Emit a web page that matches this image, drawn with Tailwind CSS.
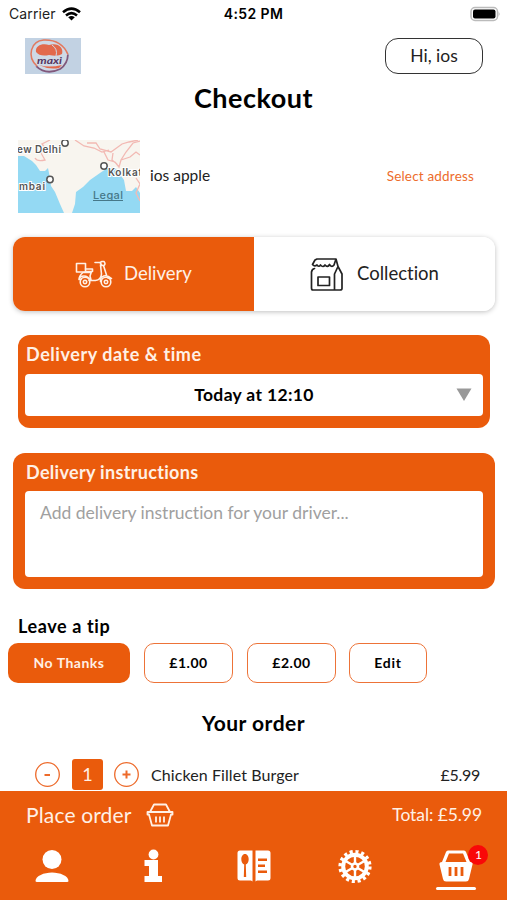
<!DOCTYPE html>
<html lang="en">
<head>
<meta charset="utf-8">
<title>Checkout</title>
<script src="https://cdn.jsdelivr.net/npm/@tailwindcss/browser@4"></script>
</head>
<body class="w-[507px] h-[900px] overflow-hidden bg-white font-['Lato',sans-serif] text-[#222] whitespace-nowrap [font-variant-ligatures:none]">
<main class="h-[791px] overflow-hidden">
  <!-- status bar -->
  <div class="h-7 pl-[9px] pr-[6px] grid grid-cols-3 items-center font-['Inter',sans-serif] text-[14px] leading-7">
    <div class="flex items-center gap-[6px]"><span class="tracking-[0.1px]">Carrier</span>
      <svg class="w-[19px] h-[14px]" viewBox="0 0 19 14" fill="none" stroke="#000" stroke-width="2.6"><path d="M1 5.2Q9.5-2 18 5.2M4 8.4Q9.500 3.800 15 8.400"/><path d="M6.200 10.300Q9.500 7.600 12.800 10.300L9.500 13.600Z" fill="#000" stroke="none"/></svg>
    </div>
    <div class="-ml-[3px] text-center font-semibold text-black tracking-[0.4px]">4:52 PM</div>
    <svg class="justify-self-end w-[31px] h-[16px]" viewBox="0 0 31 16"><rect x="1" y="1.500" width="26.500" height="13" rx="4" fill="#fff" stroke="#bbb" stroke-width="1.500"/><rect x="3" y="3.500" width="22.500" height="9" rx="2" fill="#000"/><path d="M28.700 5.500Q30.500 8 28.700 10.500Z" fill="#aaa"/></svg>
  </div>
  <!-- brand and greeting -->
  <header class="mt-[10px] h-9 pl-[25px] pr-6 flex justify-between">
    <svg class="w-14 h-9" viewBox="0 0 56 36"><rect width="56" height="36" fill="#c2d2e3"/><g transform="rotate(14 24.500 18)"><ellipse cx="24.500" cy="18" rx="18.500" ry="15.500" fill="#cfd9e6"/><path d="M14 31Q26 38 38 28Q44 21 42 12" fill="none" stroke="#80587c" stroke-width="1.800"/><path d="M15 31C2 24 3 8 15 4Q32-1 42 12" fill="none" stroke="#e2795f" stroke-width="1.500"/></g><path d="M11 14C10 7 18 5 24 7C33 4 39 10 37 16Q33 19 24 17Q15 19 11 14Z" fill="#e2694c"/><path d="M27 7Q33 11 31 18" stroke="#cfd9e6" fill="none"/><path d="M14 27Q24 30 37 27L34 30Q24 32 14 27Z" fill="#e2694c"/><text x="12" y="26" font-family="Lato" font-size="10" font-style="italic" font-weight="700" fill="#56355f" textLength="25" lengthAdjust="spacingAndGlyphs">maxi</text></svg>
    <div class="w-[98px] h-[36px] rounded-[13px] border-[1.500px] border-[#333] text-center text-[17.500px] leading-[34px]">Hi, ios</div>
  </header>
  <h1 class="h-[48px] text-center text-black font-bold text-[27px] leading-[47px] tracking-[0.500px]">Checkout</h1>
  <!-- address -->
  <section class="mt-[18px] h-[73px] pl-[18px] pr-[33px] flex items-center">
    <svg class="w-[122px] h-[73px]" viewBox="0 0 122 73" font-family="Inter" font-size="10" font-weight="600" fill="#555">
      <rect width="122" height="73" fill="#94d9f3"/>
      <path d="M0 0H122V53L118 47L114 51H108L106 40L101 33L97 27L88 29L82 33L72 40L65 47L58 52L57 64L54 73H46L42 64L37 52L33 46L32 38L30 28L27 31L22 31L18 25L14 21L6 16H0Z" fill="#f8f5ef"/>
      <path d="M17 18Q19 22 27 20L23 13L28 9L24 4L32 0M57 0L66 6L76 8L84 12L91 10M69 3L78 3L82 9L93 12L104 4L111 2L120 0M86 12L90 20L97 22L101 27L103 20L108 12L115 3L122 1M95 13L94 20L99 24M103 20L112 17L118 12L122 15M118 38L122 44L118 53L122 61" fill="none" stroke="#f2b9b3" stroke-width="1.300"/>
      <g fill="#fff" stroke="#555" stroke-width="1.500"><circle cx="47" cy="3" r="3.200"/><circle cx="86" cy="26" r="3.200"/><circle cx="32" cy="39.500" r="3.200"/></g>
      <g stroke="#fff" stroke-width="2" paint-order="stroke"><text x="-1" y="13.200" textLength="44">ew Delhi</text><text x="90" y="36" textLength="34">Kolkat</text><text x="1" y="50" textLength="26">mbai</text></g>
      <text x="75" y="58.500" font-weight="500" fill="#467889" font-size="11" textLength="30">Legal</text><path d="M75 60.500H105" stroke="#467889"/>
    </svg>
    <span class="ml-[10px] text-[15.500px] leading-5 -mt-[3px]">ios apple</span>
    <span class="ml-auto text-[13.500px] leading-5 tracking-[0.18px] text-[#ed6c2c] -mt-px">Select address</span>
  </section>
  <!-- fulfilment switch -->
  <section class="mt-6 mx-[13px] w-[482px] h-[74px] rounded-[12px] overflow-hidden shadow-[0_1px_5px_rgba(0,0,0,0.25)] flex text-[18.500px]">
    <div class="w-[241px] bg-[#ea5b0c] text-[#fff0e5] flex items-center pl-[62px]">
      <svg class="w-[38px] h-[28px]" viewBox="0 0 38 28" fill="none" stroke="#fff0e5" stroke-width="1.600" stroke-linejoin="round" stroke-linecap="round"><rect x="1.500" y="3.500" width="9" height="8.500"/><path d="M10.500 9H17.500V11.500H10.500M8 12.500C5 15 4 17 4 19.500H6M14 20.500H20.500Q26 20 26.500 14L25.500 5M20 2.500H25L27 1.500H29Q31 4 29 5.500H27L25 2.500M28.500 5.500L31.500 15M16.500 11.500L15 16L16 20M8 12.500H16M4 19.500C5 15.500 12 14 15.500 20.500M25.500 21.500C25 16 31 13.500 36.500 18.500L33 18"/><circle cx="10" cy="22" r="4.800"/><circle cx="10" cy="22" r="1.700"/><circle cx="31" cy="22" r="4.800"/><circle cx="31" cy="22" r="1.700"/></svg>
      <span class="ml-[11px]">Delivery</span>
    </div>
    <div class="flex-1 bg-white flex items-center pl-[56px]">
      <svg class="w-[34px] h-[35px]" viewBox="0 0 34 35" fill="none" stroke="#222" stroke-width="1.700" stroke-linejoin="round" stroke-linecap="round"><path d="M7 2H26L24 8C22.500 10 20.500 9.500 19.500 7.500Q17.500 11 15 8Q13 11 10.500 8Q9 10.500 7 8Q4.500 10 2.500 7.500L5 3ZM26 2L28 9.500L32 17V31.500Q32 33 30 33H3Q1.500 33 1.500 31V15Q2 12 4.500 11.500M28 9.500L24.500 17V33"/><rect x="8" y="20" width="11.500" height="8.500"/></svg>
      <span class="ml-[13px]">Collection</span>
    </div>
  </section>
  <!-- delivery slot -->
  <section class="mt-6 ml-[18px] w-[472px] h-[93px] rounded-[12px] bg-[#ea5b0c] pl-[7px]">
    <h2 class="h-[39px] pl-px text-[#fff0e5] font-bold text-[18px] leading-[38px] tracking-[0.560px]">Delivery date &amp; time</h2>
    <div class="relative w-[458px] h-[42px] rounded-[4px] bg-white text-center text-black font-bold text-[17.500px] leading-[41px] tracking-[0.350px]">Today at 12:10
      <svg class="absolute right-[11px] top-[14px] w-4 h-[13px]" viewBox="0 0 16 13"><path d="M0.500 0.500H15.500L8 13Z" fill="#999"/></svg>
    </div>
  </section>
  <section class="mt-[25px] ml-[13px] w-[482px] h-[136px] rounded-[12px] bg-[#ea5b0c] pl-3">
    <h2 class="h-[38px] pl-px text-[#fff0e5] font-bold text-[18px] leading-[38px] tracking-[0.320px]">Delivery instructions</h2>
    <div class="w-[458px] h-[86px] rounded-[4px] bg-white pl-[15px] text-[#a0a0a0] text-[17.500px] leading-[43px]">Add delivery instruction for your driver...</div>
  </section>
  <!-- tip -->
  <h2 class="mt-[25px] h-[29px] pl-[18px] text-black font-bold text-[18px] leading-[24px] tracking-[0.600px]">Leave a tip</h2>
  <div class="pl-[8px] flex h-10 text-[14px] leading-[37px] text-center font-bold text-black tracking-[0.500px]">
    <div class="w-[122px] h-[39.500px] rounded-[10px] bg-[#ea5b0c] text-[#fff0e5] leading-[39px]">No Thanks</div>
    <div class="ml-[14px] w-[89px] rounded-[10px] border-[1.500px] border-[#ed7338]">£1.00</div>
    <div class="ml-[14px] w-[89px] rounded-[10px] border-[1.500px] border-[#ed7338]">£2.00</div>
    <div class="ml-[13px] w-[78px] rounded-[10px] border-[1.500px] border-[#ed7338] tracking-[0.800px]">Edit</div>
  </div>
  <!-- order -->
  <h2 class="mt-[20px] h-[40px] text-center text-black font-bold text-[21px] leading-10 tracking-[0.500px]">Your order</h2>
  <div class="mt-[16px] h-[31px] pl-[35px] pr-[27px] flex items-center text-[16px]">
    <svg class="w-[25px] h-[25px]" viewBox="0 0 25 25" fill="none" stroke="#ed6a2a"><circle cx="12.500" cy="12.500" r="11.800" stroke-width="1.300"/><path d="M9.500 13H15" stroke-width="2"/></svg>
    <span class="ml-3 w-[31px] h-[31px] rounded-[3px] bg-[#ea5b0c] text-[#fff0e5] text-[18px] leading-[31px] text-center">1</span>
    <svg class="ml-[11px] w-[25px] h-[25px]" viewBox="0 0 25 25" fill="none" stroke="#ed6a2a"><circle cx="12.500" cy="12.500" r="11.800" stroke-width="1.300"/><path d="M8.500 12.500H16.500M12.500 8.500V16.500" stroke-width="2"/></svg>
    <span class="ml-3 tracking-[0.090px]">Chicken Fillet Burger</span>
    <span class="ml-auto tracking-[-0.300px]">£5.99</span>
  </div>
</main>
<footer class="h-[109px] bg-[#ea5b0c] text-[#fff0e5]">
  <div class="h-[48px] pl-[26px] pr-[25px] flex items-center">
    <span class="text-[21px] tracking-[0.150px]">Place order</span>
    <svg class="ml-[14px] w-[28px] h-6" viewBox="0 0 28 24" fill="none" stroke="#fff0e5" stroke-width="1.800" stroke-linejoin="round"><path d="M4 9L8 1.500H20L24 9M1.500 9H26.500V11.500H25L22 22.500H6L3 11.500H1.500ZM10 13.500V19.500M14 13.500V19.500M18 13.500V19.500"/></svg>
    <span class="ml-auto text-[17.500px] tracking-[-0.080px]">Total: £5.99</span>
  </div>
  <nav class="pl-[1px] grid grid-cols-5 justify-items-center items-start pt-[10px]">
    <svg class="w-[34px] h-[34px]" viewBox="0 0 34 34" fill="#fff"><circle cx="17" cy="10.500" r="9.500"/><path d="M.5 32C.5 27 9 23.500 17 23.500S33.500 27 33.500 32Q33.500 33 32 33H2Q.5 33 .5 32Z"/></svg>
    <svg class="w-[34px] h-[34px]" viewBox="0 0 34 34" fill="#fff"><circle cx="17.500" cy="5.500" r="4.900"/><path d="M8.500 11H22V27H26V33H8.500V27H13V17H8.500Z"/></svg>
    <svg class="w-[34px] h-[34px]" viewBox="0 0 34 34" fill="#fff"><path d="M3 1.500H15.500V32.500L14 31.500H3Q.500 31.500.500 29V4Q.500 1.500 3 1.500ZM18.500 1.500H31Q33.500 1.500 33.500 4V29Q33.500 31.500 31 31.500H20L18.500 32.500Z"/><path d="M8 5C3.500 5 3 14 7.200 15.500L6.800 28H9.200L8.800 15.500C13 14 12.500 5 8 5ZM21 9.500H30V12H21ZM21 15.500H28V18H21ZM21 21.500H30V24H21Z" fill="#ea5b0c"/></svg>
    <svg class="w-[34px] h-[34px]" viewBox="0 0 34 34" fill="none" stroke="#fff"><circle cx="17" cy="17.500" r="14.900" stroke-width="3.400" stroke-dasharray="3.100 2.750"/><circle cx="17" cy="17.500" r="11.800" stroke-width="4"/><circle cx="17" cy="17.500" r="3" stroke-width="2.600"/><path d="M17 7V14M17 21V28M8 12.300L14 15.800M20 19.200L26 22.700M8 22.700L14 19.200M20 15.800L26 12.300" stroke-width="2.400"/></svg>
    <div class="relative w-10 h-[42px] flex flex-col items-center">
      <svg class="w-[34px] h-[34px]" viewBox="0 0 34 34" fill="#fff"><path d="M9 1.500H25Q26.500 1.500 27 3L31 13H33Q34 14 33.500 15.500L30 30Q29.500 32.500 27 32.500H7Q4.500 32.500 4 30L.5 15.500Q0 13 3 13L7 3Q7.500 1.500 9 1.500ZM10 4.500L6.500 13H27.500L24 4.500Z" fill-rule="evenodd"/><path d="M11 18V27M17 18V27M23 18V27" stroke="#ea5b0c" stroke-width="2.800"/></svg>
      <div class="mt-[4px] w-10 h-[3px] rounded-full bg-white"></div>
      <span class="absolute left-[32px] -top-[4px] w-5 h-5 rounded-full bg-[#f90808] text-white text-[12px] leading-5 text-center">1</span>
    </div>
  </nav>
</footer>
</body>
</html>
